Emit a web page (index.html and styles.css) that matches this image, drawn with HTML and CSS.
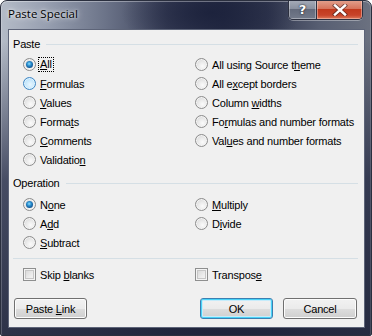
FILE: index.html
```html
<!DOCTYPE html>
<html>
<head>
<meta charset="utf-8">
<link rel="stylesheet" href="styles.css">
</head>
<body>
<div class="window">
  <div class="titlebar">
    <span class="title">Paste Special</span>
    <div class="caption-buttons">
      <div class="cb help">?</div>
      <div class="cb close">
        <svg width="16" height="12" viewBox="0 0 16 12"><path d="M3 1.5 L13 10.5 M13 1.5 L3 10.5" stroke="#3a2020" stroke-width="4.2" stroke-linecap="square" fill="none" opacity="0.6"/><path d="M3 1.5 L13 10.5 M13 1.5 L3 10.5" stroke="#ffffff" stroke-width="2.4" stroke-linecap="square" fill="none"/></svg>
      </div>
    </div>
  </div>
  <div class="client">
    <div class="group-head"><span>Paste</span><div class="rule"></div></div>
    <div class="opts six">
      <label class="opt"><span class="radio checked"></span><span class="focus"><u>A</u>ll</span></label>
      <label class="opt"><span class="radio"></span><span>All using Source t<u>h</u>eme</span></label>
      <label class="opt"><span class="radio hover"></span><span><u>F</u>ormulas</span></label>
      <label class="opt"><span class="radio"></span><span>All e<u>x</u>cept borders</span></label>
      <label class="opt"><span class="radio"></span><span><u>V</u>alues</span></label>
      <label class="opt"><span class="radio"></span><span>Column <u>w</u>idths</span></label>
      <label class="opt"><span class="radio"></span><span>Forma<u>t</u>s</span></label>
      <label class="opt"><span class="radio"></span><span>Fo<u>r</u>mulas and number formats</span></label>
      <label class="opt"><span class="radio"></span><span><u>C</u>omments</span></label>
      <label class="opt"><span class="radio"></span><span>Val<u>u</u>es and number formats</span></label>
      <label class="opt"><span class="radio"></span><span>Validatio<u>n</u></span></label>
      <div></div>
    </div>
    <div class="group-head op"><span>Operation</span><div class="rule"></div></div>
    <div class="opts three">
      <label class="opt"><span class="radio checked"></span><span>N<u>o</u>ne</span></label>
      <label class="opt"><span class="radio"></span><span><u>M</u>ultiply</span></label>
      <label class="opt"><span class="radio"></span><span>A<u>d</u>d</span></label>
      <label class="opt"><span class="radio"></span><span>D<u>i</u>vide</span></label>
      <label class="opt"><span class="radio"></span><span><u>S</u>ubtract</span></label>
      <div></div>
    </div>
    <div class="separator"></div>
    <div class="opts checks">
      <label class="opt"><span class="check"></span><span>Skip <u>b</u>lanks</span></label>
      <label class="opt"><span class="check"></span><span>Transpos<u>e</u></span></label>
    </div>
    <div class="buttons">
      <button class="btn">Paste <u>L</u>ink</button>
      <div class="spacer"></div>
      <button class="btn default">OK</button>
      <button class="btn cancel">Cancel</button>
    </div>
  </div>
</div>
</body>
</html>
```
FILE: styles.css
```css
html, body {
  margin: 0;
  padding: 0;
  background: #ffffff;
}

.window {
  width: 372px;
  height: 336px;
  box-sizing: border-box;
  border: 1px solid #2a2f3e;
  border-radius: 7px 7px 2px 2px;
  display: flex;
  flex-direction: column;
  overflow: hidden;
  background:
    linear-gradient(to bottom, rgba(34, 40, 66, 0) 0px, rgba(34, 40, 66, 0) 40px, rgba(34, 40, 66, 0.75) 180px, rgba(30, 35, 58, 0.9) 336px),
    radial-gradient(ellipse 90px 40px at 210px 12px, rgba(28, 34, 60, 0.95), rgba(28, 34, 60, 0) 100%),
    linear-gradient(to right, #b4bbc7 0%, #98a0b1 12%, #6c7489 28%, #3a4059 45%, #262c45 60%, #323850 72%, #575e72 86%, #6b7180 100%);
  box-shadow: inset 0 1px 0 rgba(255,255,255,0.35), inset 1px 0 0 rgba(255,255,255,0.2), inset -1px 0 0 rgba(255,255,255,0.15);
  font-family: "Liberation Sans", Arial, sans-serif;
  font-size: 11px;
  letter-spacing: -0.2px;
  color: #000;
}

.titlebar {
  height: 28px;
  display: flex;
  align-items: flex-start;
  flex: none;
}

.title {
  font-family: "Open Sans", "Noto Sans", sans-serif;
  font-size: 11.5px;
  letter-spacing: 0;
  line-height: 16px;
  margin: 5px 0 0 7px;
  color: #000;
  text-shadow: 0 0 6px rgba(255,255,255,0.9), 0 0 3px rgba(255,255,255,0.8);
}

.caption-buttons {
  margin-left: auto;
  margin-right: 8px;
  margin-top: -1px;
  display: flex;
  border: 1px solid #2d3140;
  border-top: none;
  border-radius: 0 0 5px 5px;
  overflow: hidden;
  box-shadow: 0 1px 0 rgba(255,255,255,0.35);
}

.cb {
  height: 19px;
  display: flex;
  align-items: center;
  justify-content: center;
}

.help {
  width: 27px;
  border-right: 1px solid #2d3140;
  background: linear-gradient(to bottom, #a7adb9 0%, #8a91a0 45%, #646b7c 50%, #737a8a 100%);
  box-shadow: inset 0 0 0 1px rgba(255,255,255,0.35);
  color: #fff;
  font-family: "DejaVu Sans", sans-serif;
  font-weight: bold;
  font-size: 13px;
  letter-spacing: 0;
  text-shadow: 0 0 2px #202430, 0 0 1px #202430;
}

.close {
  width: 45px;
  background: linear-gradient(to bottom, #e3a390 0%, #d6745c 45%, #c2391d 50%, #c8442a 80%, #dd7a5c 100%);
  box-shadow: inset 0 0 0 1px rgba(255,220,210,0.45);
}

.client {
  flex: 1;
  margin: 0 6px 7px 7px;
  border: 1px solid #5d6478;
  background: #f0f0f0;
  padding: 7px 6px 0 4px;
  display: flex;
  flex-direction: column;
}

.group-head {
  height: 14px;
  display: flex;
  align-items: center;
  line-height: 14px;
}

.group-head .rule {
  flex: 1;
  height: 1px;
  background: #d5dfe5;
  margin-left: 6px;
}

.group-head.op {
  margin-top: 7px;
}

.opts {
  display: grid;
  grid-template-columns: 172px 1fr;
  grid-auto-rows: 19px;
  padding-left: 10px;
}

.opts.six {
  margin-top: 4px;
}

.opts.three {
  margin-top: 5px;
}

.opt {
  display: flex;
  align-items: center;
  white-space: nowrap;
}

.opt u {
  text-decoration-thickness: 1px;
  text-underline-offset: 1px;
}

.radio {
  width: 13px;
  height: 13px;
  box-sizing: border-box;
  border-radius: 50%;
  border: 1px solid #8c8c8c;
  background: radial-gradient(circle at 60% 65%, #fbfbfb 0%, #e9e9e9 45%, #cfcfcf 100%);
  box-shadow: inset 0 0 0 1px #f4f4f4;
  margin-right: 4px;
  flex: none;
  position: relative;
}

.radio.checked::after {
  content: "";
  position: absolute;
  left: 2px;
  top: 2px;
  width: 7px;
  height: 7px;
  border-radius: 50%;
  background: radial-gradient(circle at 45% 40%, #8fe0ff 0%, #2a8fd0 35%, #0f4f8c 75%, #0a3a6c 100%);
}

.radio.hover {
  border-color: #3f86c4;
  background: radial-gradient(circle at 55% 60%, #eaf7ff 0%, #c4e6fb 55%, #a3d5f6 100%);
  box-shadow: inset 0 0 0 1px #dff3fe;
}

.focus {
  outline: 1px dotted #000;
  outline-offset: 0px;
  padding: 0 1px;
  margin-left: -1px;
  line-height: 13px;
}

.separator {
  height: 1px;
  background: #d5dfe5;
  margin-top: 6px;
}

.opts.checks {
  margin-top: 6px;
}

.check {
  width: 13px;
  height: 13px;
  box-sizing: border-box;
  border: 1px solid #8e8f8f;
  background: linear-gradient(135deg, #d2d2d2 0%, #ececec 60%, #f8f8f8 100%);
  box-shadow: inset 0 0 0 1px #f4f4f4, inset 0 0 0 2px #c6c6c6;
  margin-right: 4px;
  flex: none;
}

.buttons {
  display: flex;
  margin-top: 14px;
  padding: 0 1px;
}

.spacer {
  flex: 1;
}

.btn {
  width: 73px;
  height: 21px;
  box-sizing: border-box;
  border: 1px solid #707070;
  border-radius: 3px;
  background: linear-gradient(to bottom, #f2f2f2 0%, #ebebeb 50%, #dddddd 51%, #cfcfcf 100%);
  box-shadow: inset 0 0 0 1px #fcfcfc;
  font-family: "Liberation Sans", Arial, sans-serif;
  font-size: 11px;
  letter-spacing: -0.2px;
  color: #000;
  padding: 0;
}

.btn.default {
  border-color: #3c7fb1;
  box-shadow: inset 0 0 0 1px #48d3f8, inset 0 0 0 2px #c6ecfb;
}

.btn.cancel {
  width: 74px;
  margin-left: 10px;
}
```
